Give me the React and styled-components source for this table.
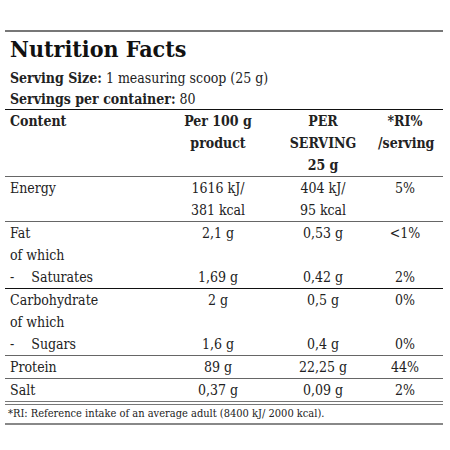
import React from 'react';
import styled, { createGlobalStyle } from 'styled-components';

const GlobalStyle = createGlobalStyle`
  body {
    margin: 0;
    background: #fff;
    font-family: 'DejaVu Serif', serif;
    font-stretch: condensed;
    color: #222;
  }
`;

const Panel = styled.div`
  width: 438px;
  margin: 30px 0 0 5px;
  border-top: 2px solid #777;
`;

const Title = styled.h1`
  margin: 0;
  height: 35px;
  line-height: 33px;
  padding-left: 5px;
  font-size: 23px;
  font-weight: 700;
  color: #111;
`;

const InfoLine = styled.div`
  height: 21px;
  line-height: 22px;
  padding-left: 5px;
  font-size: 14px;
  b {
    font-weight: 700;
  }
`;

const Section = styled.div`
  border-top: ${(p) => (p.$dark ? '1px solid #111' : '1px solid #666')};
  ${(p) => p.$double && 'border-bottom: 4px double #777;'}
`;

const Row = styled.div`
  display: grid;
  grid-template-columns: 163px 100px 110px 54px;
  height: 22px;
  line-height: 22px;
  font-size: 14px;
  font-weight: ${(p) => (p.$head ? 700 : 400)};
`;

const Label = styled.span`
  padding-left: 5px;
  white-space: nowrap;
`;

const Sub = styled(Label)`
  display: flex;
  gap: 17px;
`;

const Cell = styled.span`
  text-align: center;
  white-space: nowrap;
`;

const Footnote = styled.div`
  height: 18px;
  line-height: 18px;
  padding-left: 3px;
  font-size: 11px;
  border-bottom: 2px solid #888;
`;

const Line = ({ label, a, b, c, head, sub }) => (
  <Row $head={head}>
    {sub ? (
      <Sub>
        <span>-</span>
        <span>{label}</span>
      </Sub>
    ) : (
      <Label>{label}</Label>
    )}
    <Cell>{a}</Cell>
    <Cell>{b}</Cell>
    <Cell>{c}</Cell>
  </Row>
);

export default function App() {
  return (
    <>
      <GlobalStyle />
      <Panel>
        <Title>Nutrition Facts</Title>
        <InfoLine>
          <b>Serving Size:</b> 1 measuring scoop (25 g)
        </InfoLine>
        <InfoLine>
          <b>Servings per container:</b> 80
        </InfoLine>
        <Section $dark>
          <Line head label="Content" a="Per 100 g" b="PER" c="*RI%" />
          <Line head a="product" b="SERVING" c="/serving" />
          <Line head b="25 g" />
        </Section>
        <Section>
          <Line label="Energy" a="1616 kJ/" b="404 kJ/" c="5%" />
          <Line a="381 kcal" b="95 kcal" />
        </Section>
        <Section>
          <Line label="Fat" a="2,1 g" b="0,53 g" c="<1%" />
          <Line label="of which" />
          <Line sub label="Saturates" a="1,69 g" b="0,42 g" c="2%" />
        </Section>
        <Section $dark>
          <Line label="Carbohydrate" a="2 g" b="0,5 g" c="0%" />
          <Line label="of which" />
          <Line sub label="Sugars" a="1,6 g" b="0,4 g" c="0%" />
        </Section>
        <Section>
          <Line label="Protein" a="89 g" b="22,25 g" c="44%" />
        </Section>
        <Section $double>
          <Line label="Salt" a="0,37 g" b="0,09 g" c="2%" />
        </Section>
        <Footnote>*RI: Reference intake of an average adult (8400 kJ/ 2000 kcal).</Footnote>
      </Panel>
    </>
  );
}
